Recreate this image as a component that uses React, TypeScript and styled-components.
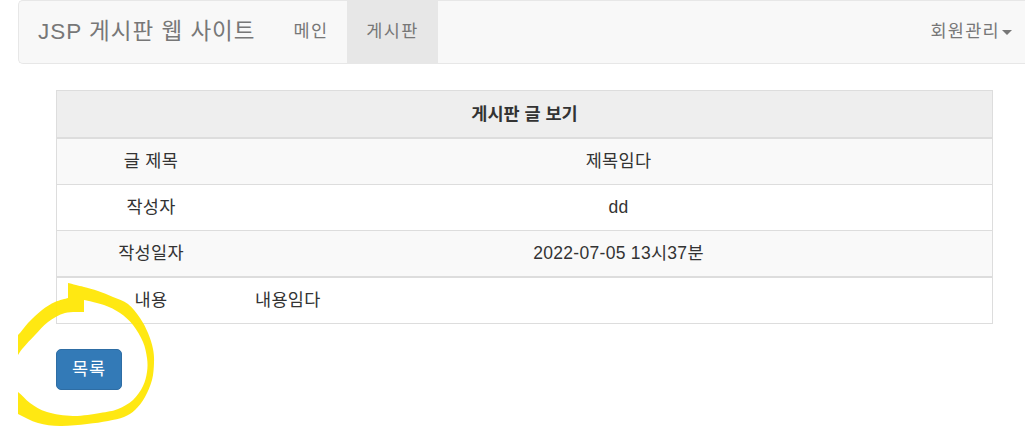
import React from 'react';
import styled, { createGlobalStyle } from 'styled-components';

const GlobalStyle = createGlobalStyle`
  html, body {
    margin: 0;
    padding: 0;
    background: #ffffff;
    overflow: hidden;
  }
  body {
    font-family: "Liberation Sans", "Noto Sans CJK KR", sans-serif;
    font-size: 17.5px;
    line-height: 25px;
    color: #333333;
  }
`;

const Page = styled.div`
  position: relative;
  width: 1025px;
  height: 435px;
  overflow: hidden;
`;

const Navbar = styled.nav`
  display: flex;
  align-items: stretch;
  justify-content: space-between;
  margin: 0 -8px 0 18px;
  height: 62px;
  background: #f8f8f8;
  border: 1px solid #e7e7e7;
  border-right: none;
  border-radius: 5px 0 0 5px;
  padding-left: 1px;
  padding-right: 2px;
`;

const NavGroup = styled.div`
  display: flex;
  align-items: stretch;
`;

const Brand = styled.a`
  display: flex;
  align-items: center;
  padding: 0 19px 2px 18px;
  font-size: 22.5px;
  letter-spacing: 1px;
  color: #777777;
  text-decoration: none;
`;

const NavLink = styled.a<{ $active?: boolean }>`
  display: flex;
  align-items: center;
  padding: 0 19px 2px;
  letter-spacing: 1.3px;
  color: #777777;
  text-decoration: none;
  background: ${({ $active }) => ($active ? '#e7e7e7' : 'transparent')};
`;

const Caret = styled.span`
  display: inline-block;
  width: 0;
  height: 0;
  margin-left: 2px;
  margin-top: 2px;
  border-top: 5px solid #777777;
  border-left: 5px solid transparent;
  border-right: 5px solid transparent;
`;

const Content = styled.div`
  padding: 26px 0 0 56px;
`;

const Table = styled.table`
  width: 937px;
  border-collapse: collapse;
  border: 1px solid #dddddd;
  margin-bottom: 25px;
`;

const HeadCell = styled.th`
  height: 46px;
  padding: 0 10px;
  background: #eeeeee;
  text-align: center;
  font-weight: bold;
  border-bottom: 2px solid #dddddd;
`;

const Row = styled.tr<{ $striped?: boolean; $thick?: boolean }>`
  background: ${({ $striped }) => ($striped ? '#f9f9f9' : '#ffffff')};
  border-bottom: ${({ $thick }) => ($thick ? '2px' : '1px')} solid #dddddd;
`;

const Cell = styled.td<{ $left?: boolean; $label?: boolean }>`
  height: 45px;
  padding: 0 10px;
  text-align: ${({ $left }) => ($left ? 'left' : 'center')};
  width: ${({ $label }) => ($label ? '168px' : 'auto')};
  vertical-align: middle;
  letter-spacing: 0.3px;
`;

const Button = styled.a`
  display: inline-block;
  padding: 7px 15px;
  font-size: 17.5px;
  line-height: 25px;
  letter-spacing: 1px;
  color: #ffffff;
  background: #337ab7;
  border: 1px solid #2e6da4;
  border-radius: 5px;
  text-decoration: none;
`;

const Marker = styled.svg`
  position: absolute;
  left: 18px;
  top: 270px;
  pointer-events: none;
`;

type P = [number, number];

// catmull-rom through the points, as cubic segments (no leading M)
const smooth = (pts: P[]) => {
  let d = '';
  for (let i = 0; i < pts.length - 1; i++) {
    const p0 = pts[i - 1] || pts[i];
    const p1 = pts[i];
    const p2 = pts[i + 1];
    const p3 = pts[i + 2] || p2;
    const c1x = p1[0] + (p2[0] - p0[0]) / 6;
    const c1y = p1[1] + (p2[1] - p0[1]) / 6;
    const c2x = p2[0] - (p3[0] - p1[0]) / 6;
    const c2y = p2[1] - (p3[1] - p1[1]) / 6;
    d += ` C${c1x.toFixed(1)} ${c1y.toFixed(1)} ${c2x.toFixed(1)} ${c2y.toFixed(1)} ${p2[0]} ${p2[1]}`;
  }
  return d;
};

// highlighter ring drawn round the button, page coordinates
const leftArmOuter: P[] = [[5, 344], [18, 335], [28, 323], [42, 310], [55, 302], [68, 298]];
const outerArc: P[] = [
  [68, 283], [76, 285], [84, 287], [98, 291], [113, 297], [128, 304], [140, 318],
  [148, 333], [153, 349], [154, 363], [152, 380], [145, 397], [135, 410], [124, 417],
  [108, 421], [87, 424], [60, 426], [38, 423], [18, 414], [5, 407],
];
const innerArc: P[] = [
  [5, 386], [18, 392], [30, 403], [47, 412], [73, 416], [100, 413], [118, 409],
  [133, 400], [143, 386], [147, 372], [147, 358], [143, 342], [133, 325], [120, 313],
  [104, 305], [84, 300],
];
const leftArmInner: P[] = [[84, 312], [65, 313], [48, 322], [35, 335], [23, 348], [18, 355], [10, 366]];

const markerPath =
  `M${leftArmOuter[0][0]} ${leftArmOuter[0][1]}` +
  smooth(leftArmOuter) +
  ` L${outerArc[0][0]} ${outerArc[0][1]}` +
  smooth(outerArc) +
  ` L${innerArc[0][0]} ${innerArc[0][1]}` +
  smooth(innerArc) +
  ` L${leftArmInner[0][0]} ${leftArmInner[0][1]}` +
  smooth(leftArmInner) +
  ' Z';

const rows = [
  { label: '글 제목', value: '제목임다' },
  { label: '작성자', value: 'dd' },
  { label: '작성일자', value: '2022-07-05 13시37분' },
];

export default function App() {
  return (
    <Page>
      <GlobalStyle />
      <Navbar>
        <NavGroup>
          <Brand href="#">JSP 게시판 웹 사이트</Brand>
          <NavLink href="#">메인</NavLink>
          <NavLink href="#" $active>게시판</NavLink>
        </NavGroup>
        <NavGroup>
          <NavLink href="#">
            회원관리<Caret />
          </NavLink>
        </NavGroup>
      </Navbar>

      <Content>
        <Table>
          <thead>
            <tr>
              <HeadCell colSpan={2}>게시판 글 보기</HeadCell>
            </tr>
          </thead>
          <tbody>
            {rows.map((r, i) => (
              <Row key={r.label} $striped={i % 2 === 0} $thick={i === rows.length - 1}>
                <Cell $label>{r.label}</Cell>
                <Cell>{r.value}</Cell>
              </Row>
            ))}
            <Row>
              <Cell $label>내용</Cell>
              <Cell $left>내용임다</Cell>
            </Row>
          </tbody>
        </Table>
        <Button href="#">목록</Button>
      </Content>

      <Marker width="152" height="165" viewBox="18 270 152 165">
        <path d={markerPath} fill="#ffe600" fillOpacity={0.93} />
      </Marker>
    </Page>
  );
}
